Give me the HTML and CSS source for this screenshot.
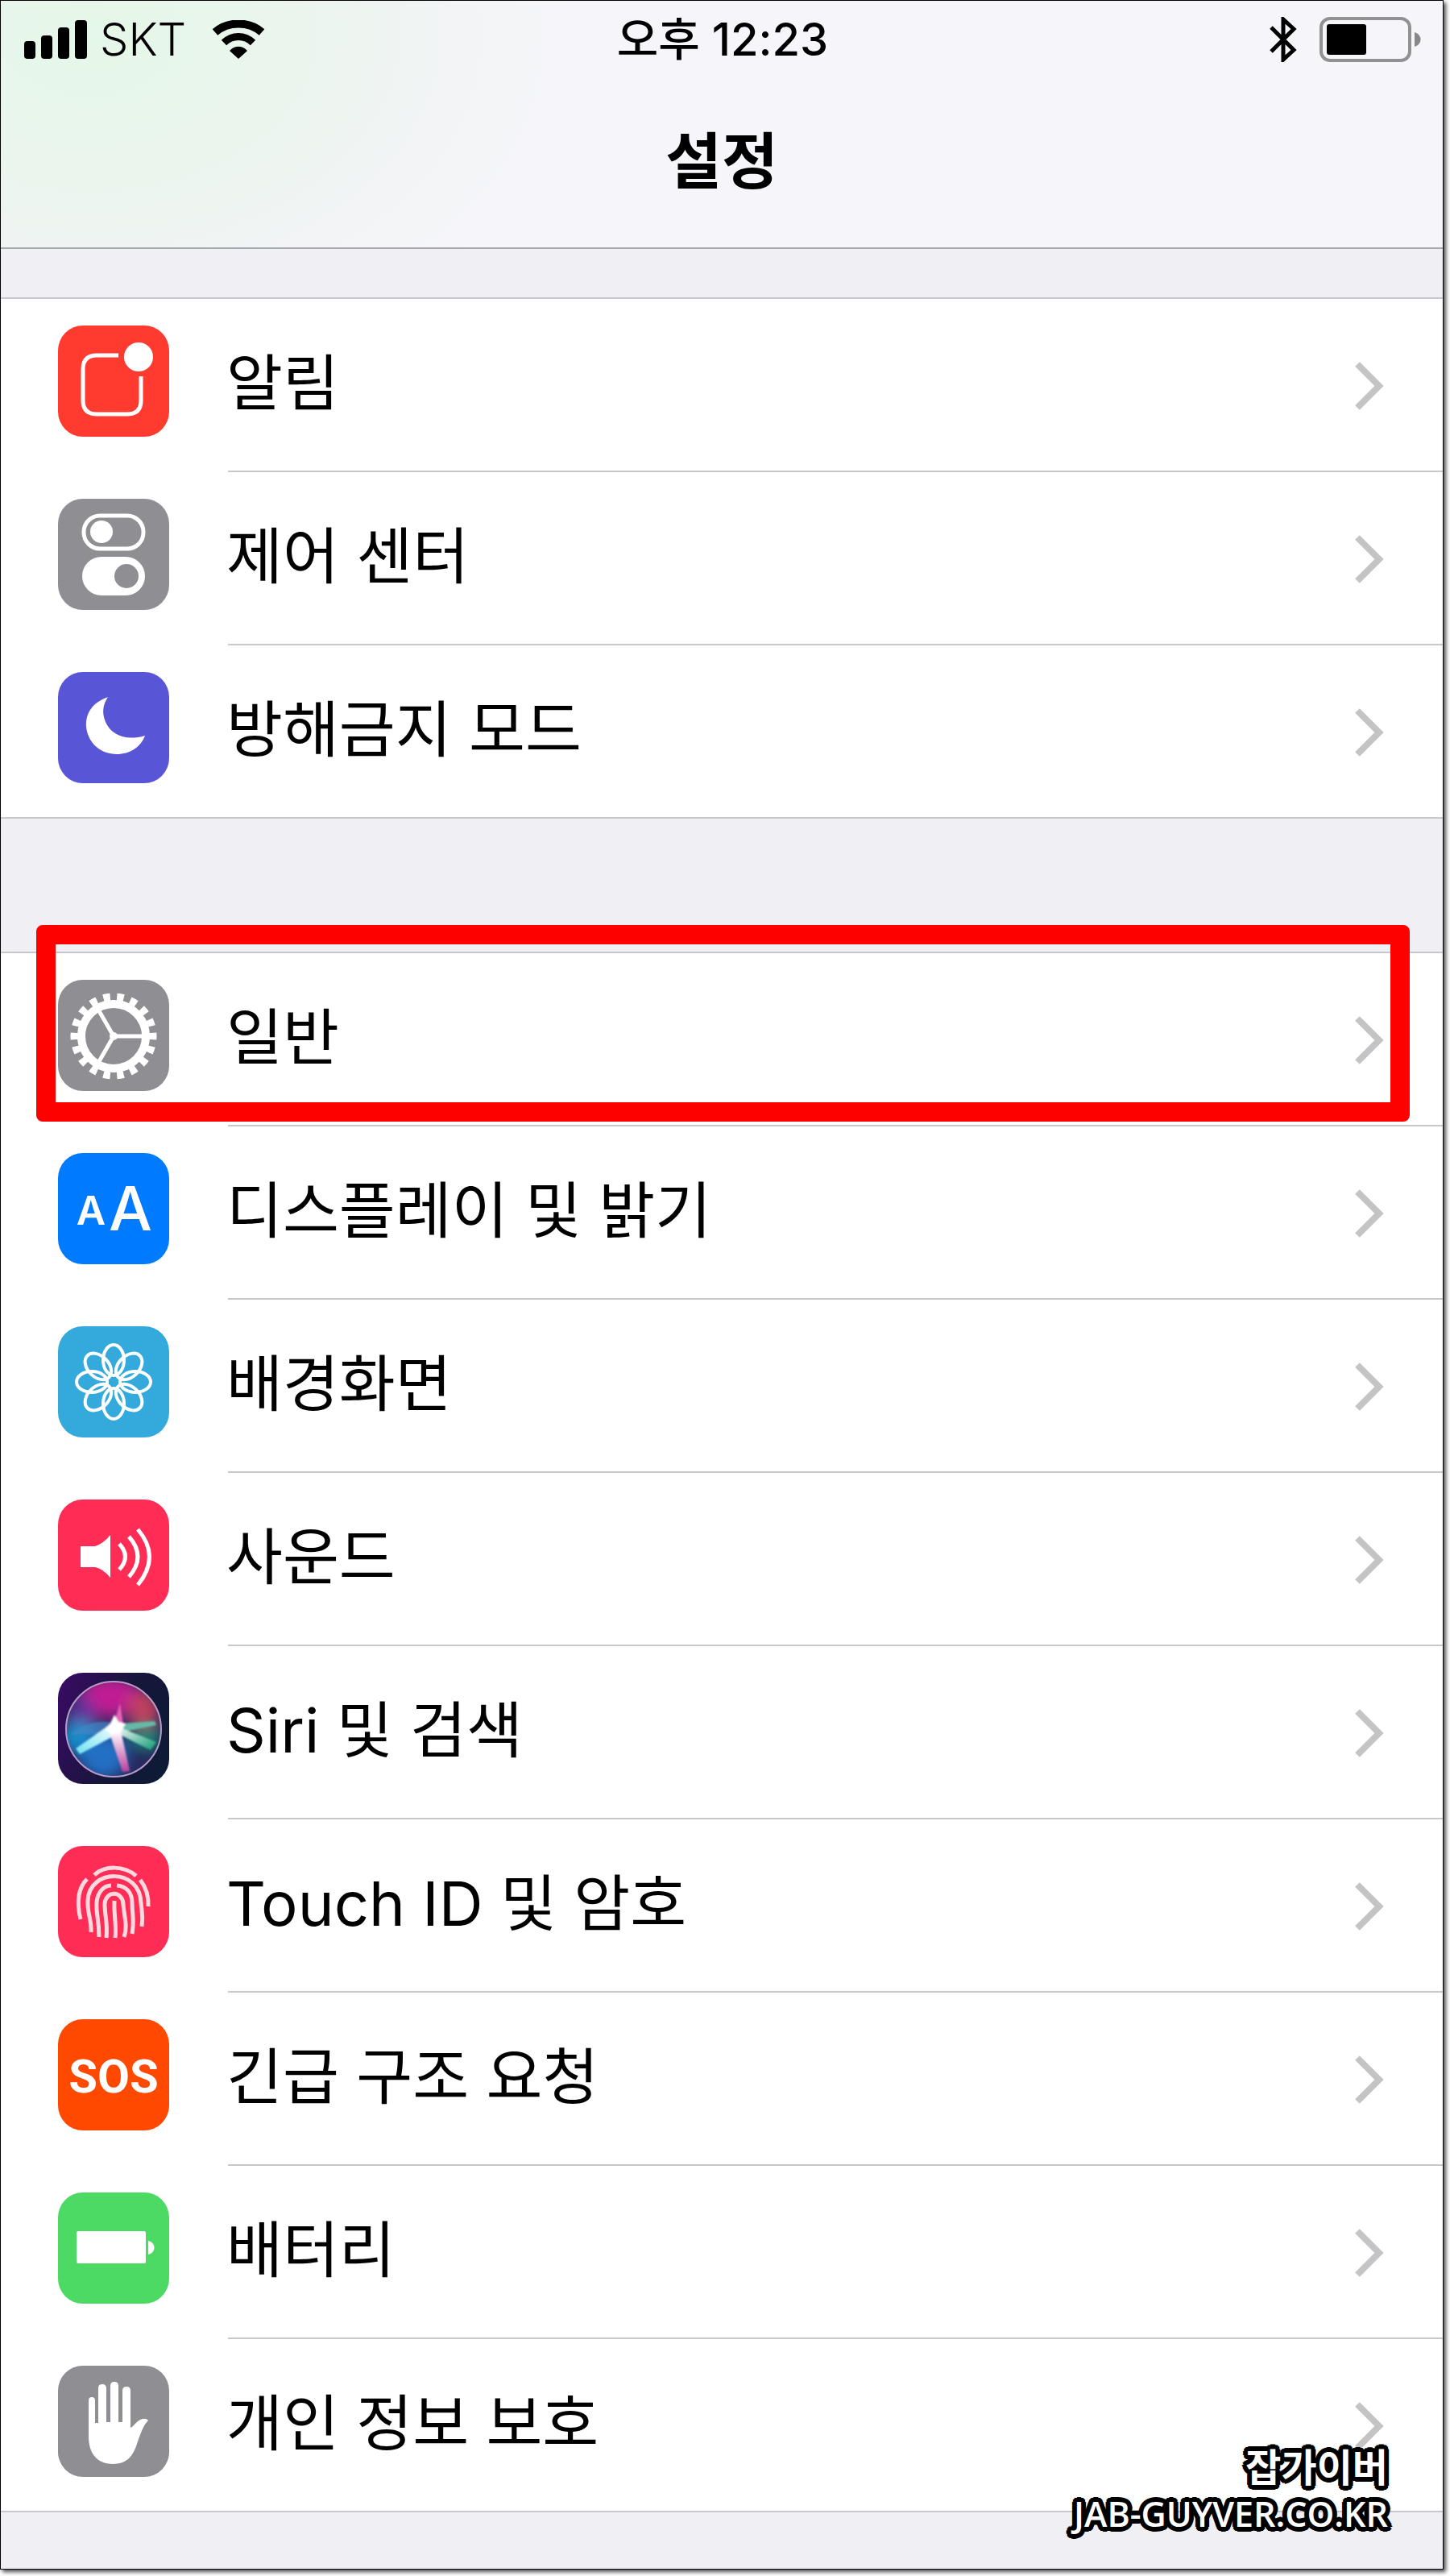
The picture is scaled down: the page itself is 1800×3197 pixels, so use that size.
FILE: index.html
```html
<!DOCTYPE html>
<html lang="ko">
<head>
  <meta charset="UTF-8" />
  <meta name="viewport" content="width=device-width, initial-scale=1.0"/>
  <title>설정</title>
  <link rel="stylesheet" href="styles.css">
</head>
<body>

  <!-- Shared chevron -->
  <svg class="defs" width="0" height="0">
    <symbol id="chevron" viewBox="0 0 38 62">
      <path d="M4 4L31 31L4 58" fill="none" stroke="#c4c4c6" stroke-width="8"/>
    </symbol>
  </svg>

  <div class="screen">
    <header class="header">
      <div class="status-bar">
        <div class="status-left">
          <svg width="78" height="48" viewBox="0 0 78 48">
            <rect x="0" y="26" width="14" height="22" rx="4"/>
            <rect x="21" y="19" width="14" height="29" rx="4"/>
            <rect x="42" y="9" width="14" height="39" rx="4"/>
            <rect x="63" y="0" width="15" height="48" rx="4"/>
          </svg>
          <span class="carrier">SKT</span>
          <svg class="wifi" width="66" height="48" viewBox="0 0 66 48">
            <path d="M4 15C20 1 46 1 62 15" fill="none" stroke="#000" stroke-width="10"/>
            <path d="M15 28C25 18 41 18 51 28" fill="none" stroke="#000" stroke-width="9"/>
            <path d="M22 38C28 31 38 31 44 38L33 48Z"/>
          </svg>
        </div>
        <span class="time">오후 12:23</span>
        <div class="status-right">
          <svg width="34" height="56" viewBox="0 0 34 56">
            <path d="M2 13L30 41L17 53V3L30 15L2 43" fill="none" stroke="#000" stroke-width="5"/>
          </svg>
          <svg width="126" height="56" viewBox="0 0 126 56">
            <rect x="2" y="2" width="110" height="52" rx="11" fill="none" stroke="#919191" stroke-width="4"/>
            <rect x="9" y="9" width="49" height="38" rx="3"/>
            <path d="M118 19C128 22 128 34 118 37Z" fill="#888"/>
          </svg>
        </div>
      </div>
      <h1>설정</h1>
    </header>

    <main>
      <ul class="group">
        <li>
          <a href="#notifications">
            <svg class="icon red" viewBox="0 0 138 138">
              <path d="M75 37H48Q31 37 31 54V93Q31 110 48 110H86Q103 110 103 93V63" fill="none" stroke="#fff" stroke-width="5"/>
              <circle cx="100" cy="39" r="18" fill="#fff"/>
            </svg>
            <span class="label">알림</span>
            <svg class="chevron"><use href="#chevron"/></svg>
          </a>
        </li>
        <li>
          <a href="#control-center">
            <svg class="icon gray" viewBox="0 0 138 138">
              <rect x="32" y="21" width="74" height="41" rx="20" fill="none" stroke="#fff" stroke-width="5"/>
              <circle cx="54" cy="41" r="14" fill="#fff"/>
              <rect x="30" y="72" width="78" height="48" rx="24" fill="#fff"/>
              <circle cx="85" cy="96" r="15" fill="#8e8e93"/>
            </svg>
            <span class="label">제어 센터</span>
            <svg class="chevron"><use href="#chevron"/></svg>
          </a>
        </li>
        <li>
          <a href="#do-not-disturb">
            <svg class="icon purple" viewBox="0 0 138 138">
              <path d="M62 31C42 38 34 52 35 68C37 88 53 102 73 102C89 102 103 93 108 79C84 86 66 78 59 62C54 50 56 40 62 31Z" fill="#fff"/>
            </svg>
            <span class="label">방해금지 모드</span>
            <svg class="chevron"><use href="#chevron"/></svg>
          </a>
        </li>
      </ul>

      <ul class="group">
        <li class="highlight">
          <a href="#general">
            <svg class="icon gray" viewBox="0 0 138 138">
              <g fill="none" stroke="#fff">
                <circle cx="69" cy="70" r="40" stroke-width="10"/>
                <circle cx="69" cy="70" r="48" stroke-width="11" pathLength="36" stroke-dasharray="1 1" stroke-dashoffset="0.5"/>
                <path d="M69 70H106M69 70L50 37M69 70L50 103" stroke-width="5"/>
              </g>
              <circle cx="69" cy="70" r="5" fill="#fff"/>
            </svg>
            <span class="label">일반</span>
            <svg class="chevron"><use href="#chevron"/></svg>
          </a>
        </li>
        <li>
          <a href="#display">
            <svg class="icon blue" viewBox="0 0 138 138">
              <text class="letter-small" x="41" y="89">A</text>
              <text class="letter-large" x="90" y="96">A</text>
            </svg>
            <span class="label">디스플레이 및 밝기</span>
            <svg class="chevron"><use href="#chevron"/></svg>
          </a>
        </li>
        <li>
          <a href="#wallpaper">
            <svg class="icon sky" viewBox="0 0 138 138">
              <defs>
                <ellipse id="petal" cy="-27" rx="13" ry="19"/>
              </defs>
              <g transform="translate(69 69)" fill="none" stroke="#fff" stroke-width="4">
                <use href="#petal"/>
                <use href="#petal" transform="rotate(45)"/>
                <use href="#petal" transform="rotate(90)"/>
                <use href="#petal" transform="rotate(135)"/>
                <use href="#petal" transform="rotate(180)"/>
                <use href="#petal" transform="rotate(225)"/>
                <use href="#petal" transform="rotate(270)"/>
                <use href="#petal" transform="rotate(315)"/>
              </g>
            </svg>
            <span class="label">배경화면</span>
            <svg class="chevron"><use href="#chevron"/></svg>
          </a>
        </li>
        <li>
          <a href="#sounds">
            <svg class="icon pink" viewBox="0 0 138 138">
              <path d="M28 58H46Q56 55 65 44V97Q56 86 46 84H28Z" fill="#fff"/>
              <path d="M76 55Q91 71 76 87M88 46Q110 71 88 96M99 37Q128 71 99 106" fill="none" stroke="#fff" stroke-width="5"/>
            </svg>
            <span class="label">사운드</span>
            <svg class="chevron"><use href="#chevron"/></svg>
          </a>
        </li>
        <li>
          <a href="#siri">
            <svg class="icon siri" viewBox="0 0 138 138">
              <defs>
                <clipPath id="orb"><circle cx="69" cy="70" r="59"/></clipPath>
                <filter id="soft" x="-50%" y="-50%" width="200%" height="200%"><feGaussianBlur stdDeviation="9"/></filter>
                <filter id="glow" x="-50%" y="-50%" width="200%" height="200%"><feGaussianBlur stdDeviation="1"/></filter>
                <linearGradient id="ray-left" x1="1" y1="0" x2="0" y2="1"><stop offset="0" stop-color="#fff"/><stop offset="1" stop-color="#6fe3f0"/></linearGradient>
                <linearGradient id="ray-right" x1="0" y1="0" x2="1" y2="1"><stop offset="0" stop-color="#fff"/><stop offset="1" stop-color="#0c9a72"/></linearGradient>
                <linearGradient id="ray-down" x1="0" y1="0" x2="0" y2="1"><stop offset="0" stop-color="#fff"/><stop offset="1" stop-color="#b8409f"/></linearGradient>
              </defs>
              <g clip-path="url(#orb)">
                <rect width="138" height="138" fill="#28285c"/>
                <g filter="url(#soft)">
                  <ellipse cx="65" cy="30" rx="40" ry="25" fill="#c01f93"/>
                  <ellipse cx="106" cy="45" rx="20" ry="23" fill="#c0405f"/>
                  <ellipse cx="30" cy="52" rx="16" ry="24" fill="#62309b"/>
                  <ellipse cx="26" cy="80" rx="22" ry="20" fill="#1290cc"/>
                  <ellipse cx="56" cy="103" rx="30" ry="28" fill="#2470c4"/>
                  <ellipse cx="108" cy="80" rx="20" ry="16" fill="#168375"/>
                </g>
                <g filter="url(#glow)">
                  <path d="M68 62C50 59 32 62 15 77L66 76Z" fill="#4086c6" opacity=".7"/>
                  <path d="M68 62L22 94L27 101L76 75Z" fill="url(#ray-left)"/>
                  <path d="M68 64L120 60L122 65L78 74Z" fill="#66b9a9"/>
                  <path d="M72 66L122 86L115 96L73 75Z" fill="url(#ray-right)"/>
                  <path d="M64 75L80 123L89 122L78 72Z" fill="url(#ray-down)"/>
                  <path d="M68 68L77 38L81 64L75 74Z" fill="#e563b7"/>
                  <path d="M70 52L75 61L84 63L78 74L67 77L58 70L65 63Z" fill="#fff"/>
                </g>
              </g>
              <circle cx="69" cy="70" r="59" fill="none" stroke="#b59bc5" stroke-width="2"/>
            </svg>
            <span class="label">Siri 및 검색</span>
            <svg class="chevron"><use href="#chevron"/></svg>
          </a>
        </li>
        <li>
          <a href="#touch-id">
            <svg class="icon pink" viewBox="0 0 138 138">
              <g fill="none" stroke="#ffd9df" stroke-width="5">
                <path d="M36 41C23 54 24 74 28 91M45 36C58 24 82 24 97 37M102 42Q113 56 112 75"/>
                <path d="M41 107C42 91 36 84 37 68C38 28 102 26 103 71C104 82 106 86 104 100"/>
                <path d="M51 113C51 90 47 86 48 70C49 57 57 49 66 49M73 49C85 50 92 58 92 71C92 85 95 91 92 109"/>
                <path d="M60 114C62 96 58 87 58 72C59 55 80 55 81 72C82 88 87 99 82 113"/>
                <path d="M70 68C69 84 73 99 71 114"/>
              </g>
            </svg>
            <span class="label">Touch ID 및 암호</span>
            <svg class="chevron"><use href="#chevron"/></svg>
          </a>
        </li>
        <li>
          <a href="#sos">
            <svg class="icon orange" viewBox="0 0 138 138">
              <text class="sos" x="69" y="91">SOS</text>
            </svg>
            <span class="label">긴급 구조 요청</span>
            <svg class="chevron"><use href="#chevron"/></svg>
          </a>
        </li>
        <li>
          <a href="#battery">
            <svg class="icon green" viewBox="0 0 138 138">
              <rect x="23" y="48" width="86" height="40" rx="2" fill="#fff"/>
              <path d="M112 60C122 62 122 75 112 77Z" fill="#fff"/>
            </svg>
            <span class="label">배터리</span>
            <svg class="chevron"><use href="#chevron"/></svg>
          </a>
        </li>
        <li>
          <a href="#privacy">
            <svg class="icon gray" viewBox="0 0 138 138">
              <path d="M38 43Q38 39 42 39Q46 39 46 43V71H50V28Q50 23 55 23Q60 23 60 28V70H65V25Q65 20 70 20Q75 20 75 25V70H80V31Q80 26 85 26Q90 26 90 31V77C94 76 97 68 105 66Q110 65 112 68C106 74 104 81 100 91C95 108 89 122 68 122C48 122 38 108 38 88Z" fill="#fff"/>
            </svg>
            <span class="label">개인 정보 보호</span>
            <svg class="chevron"><use href="#chevron"/></svg>
          </a>
        </li>
      </ul>
    </main>

    <div class="watermark">
      <span class="watermark-name">잡가이버</span>
      <span class="watermark-site">JAB-GUYVER.CO.KR</span>
    </div>
  </div>

</body>
</html>
```
FILE: styles.css
```css
* {
  box-sizing: border-box;
}

body {
  font-family: Inter, 'Noto Sans CJK KR', sans-serif;
  margin: 0;
  padding: 0 8px 8px 0;
  background-color: #fff;
  color: #000;
}

.defs {
  position: absolute;
}

.screen {
  position: relative;
  padding-bottom: 70px;
  border: 1px solid #000;
  background-color: #efeff4;
  box-shadow: 3px 3px 5px rgba(0, 0, 0, 0.7);
}

.header {
  height: 308px;
  padding-top: 13px;
  border-bottom: 2px solid #a9a8ae;
  background: radial-gradient(ellipse 600px 420px at 110px 40px, #e5f7e8 0%, #ebf5ee 45%, #f2f4f5 75%, #f6f6fa 100%);
}

.status-bar {
  display: grid;
  grid-template-columns: 1fr auto 1fr;
  align-items: center;
  height: 70px;
  padding: 0 27px 0 29px;
  font-size: 56px;
  line-height: 70px;
}

.status-left,
.status-right {
  display: flex;
  align-items: center;
}

.status-right {
  justify-content: flex-end;
  gap: 28px;
}

.carrier {
  margin-left: 16px;
  font-weight: 300;
}

.wifi {
  margin-left: 32px;
}

.time {
  font-weight: 500;
}

h1 {
  margin: 63px 0 0;
  font-size: 76px;
  line-height: 106px;
  font-weight: 700;
  text-align: center;
}

.group {
  list-style-type: none;
  margin: 60px 0 0;
  padding: 0;
  border-top: 2px solid #c8c7cc;
  background-color: #fff;
}

.group + .group {
  margin-top: 165px;
}

li {
  position: relative;
}

li a {
  display: flex;
  align-items: center;
  height: 215px;
  padding: 0 72px 0 71px;
  background: linear-gradient(#c8c7cc, #c8c7cc) 282px 100% / 100% 2px no-repeat;
  color: #000;
  text-decoration: none;
}

li:last-child a {
  background-position: 0 100%;
}

.icon {
  flex-shrink: 0;
  width: 138px;
  height: 138px;
  margin-bottom: 12px;
  border-radius: 31px;
}

.label {
  flex: 1;
  margin: 0 0 8px 71px;
  font-size: 76px;
  line-height: 110px;
}

.chevron {
  width: 38px;
  height: 62px;
}

.red {
  background-color: #ff3b30;
}

.gray {
  background-color: #8e8e93;
}

.purple {
  background-color: #5856d6;
}

.blue {
  background-color: #007aff;
}

.sky {
  background-color: #34aadc;
}

.pink {
  background-color: #ff2d55;
}

.orange {
  background-color: #ff4800;
}

.green {
  background-color: #4cd964;
}

.siri {
  background: linear-gradient(110deg, #3b0a66, #16163a 55%, #0c1c35);
}

.icon text {
  fill: #fff;
  text-anchor: middle;
}

.letter-small {
  font-size: 50px;
  font-weight: 600;
}

.letter-large {
  font-size: 76px;
  font-weight: 500;
}

.sos {
  font-family: Roboto, sans-serif;
  font-size: 58px;
  font-weight: 700;
}

/* Red frame around the row to tap */
.highlight::after {
  content: '';
  position: absolute;
  top: -35px;
  right: 41px;
  bottom: 6px;
  left: 44px;
  border: 24px solid #fd0000;
  border-radius: 8px;
  pointer-events: none;
}

/* White text with a round black outline */
.watermark {
  position: absolute;
  right: 68px;
  bottom: 40px;
  display: flex;
  flex-direction: column;
  align-items: flex-end;
  color: #fff;
  font-family: 'Open Sans', 'Noto Sans CJK KR', sans-serif;
  text-shadow:
    6px 0 #000, -6px 0 #000, 0 6px #000, 0 -6px #000,
    4px 4px #000, -4px 4px #000, 4px -4px #000, -4px -4px #000,
    5px 3px #000, -5px 3px #000, 5px -3px #000, -5px -3px #000,
    3px 5px #000, -3px 5px #000, 3px -5px #000, -3px -5px #000;
}

.watermark-name {
  font-size: 48px;
  line-height: 60px;
  font-weight: 700;
}

.watermark-site {
  font-size: 43px;
  line-height: 56px;
  font-weight: 600;
}
```
